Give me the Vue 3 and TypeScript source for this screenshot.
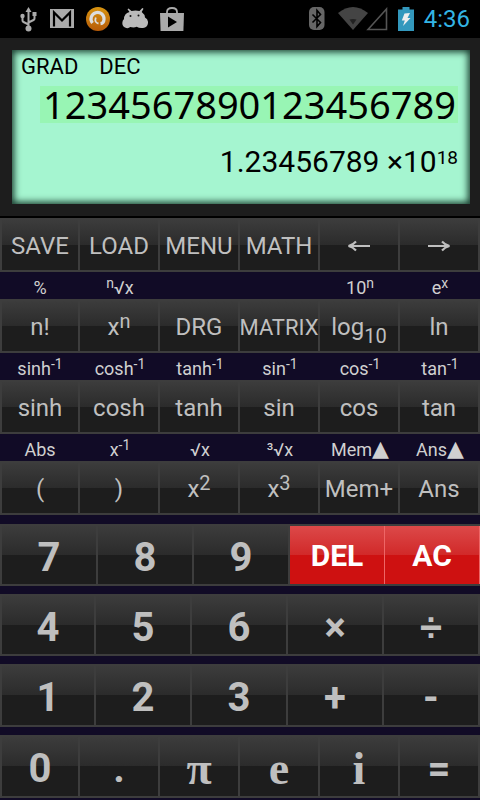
<script setup lang="ts">
import { ref } from 'vue'

interface Key {
  base: string
  sup?: string
  sub?: string
  kind?: 'small' | 'serif' | 'danger' | 'divide' | 'left' | 'right'
  name?: string
}

interface Hint {
  pre?: string
  text?: string
  sup?: string
  recall?: boolean
}

interface FunctionRow {
  keys: Key[]
  hints?: Hint[]
}

const expression = ref('1234567890123456789')

const functionRows: FunctionRow[] = [
  {
    keys: [
      { base: 'SAVE' },
      { base: 'LOAD' },
      { base: 'MENU' },
      { base: 'MATH' },
      { base: '', kind: 'left', name: 'Cursor left' },
      { base: '', kind: 'right', name: 'Cursor right' },
    ],
  },
  {
    hints: [{ text: '%' }, { pre: 'n', text: '√x' }, {}, {}, { text: '10', sup: 'n' }, { text: 'e', sup: 'x' }],
    keys: [
      { base: 'n!' },
      { base: 'x', sup: 'n' },
      { base: 'DRG' },
      { base: 'MATRIX', kind: 'small' },
      { base: 'log', sub: '10' },
      { base: 'ln' },
    ],
  },
  {
    hints: ['sinh', 'cosh', 'tanh', 'sin', 'cos', 'tan'].map((text) => ({ text, sup: '-1' })),
    keys: ['sinh', 'cosh', 'tanh', 'sin', 'cos', 'tan'].map((base) => ({ base })),
  },
  {
    hints: [
      { text: 'Abs' },
      { text: 'x', sup: '-1' },
      { text: '√x' },
      { text: '³√x' },
      { text: 'Mem', recall: true },
      { text: 'Ans', recall: true },
    ],
    keys: [
      { base: '(' },
      { base: ')' },
      { base: 'x', sup: '2' },
      { base: 'x', sup: '3' },
      { base: 'Mem+' },
      { base: 'Ans' },
    ],
  },
]

const numberRows: Key[][] = [
  [{ base: '7' }, { base: '8' }, { base: '9' }, { base: 'DEL', kind: 'danger' }, { base: 'AC', kind: 'danger' }],
  [{ base: '4' }, { base: '5' }, { base: '6' }, { base: '×' }, { base: '÷', kind: 'divide' }],
  [{ base: '1' }, { base: '2' }, { base: '3' }, { base: '+' }, { base: '-' }],
  [
    { base: '0' },
    { base: '.' },
    { base: 'π', kind: 'serif' },
    { base: 'e', kind: 'serif' },
    { base: 'i', kind: 'serif' },
    { base: '=' },
  ],
]

function press(key: Key): void {
  if (key.base === 'AC') expression.value = ''
  else if (key.base === 'DEL') expression.value = expression.value.slice(0, -1)
  else if (/^[0-9.+\-×÷πei]$/.test(key.base)) expression.value += key.base
}
</script>

<template>
  <div class="calculator">
    <header class="status">
      <div class="status-group notices">
        <svg width="18" height="26" viewBox="0 0 18 26" aria-hidden="true">
          <g fill="none" stroke="#aaa" stroke-width="2">
            <path d="M8.500 4v18M2.500 10v4.500q0 1 1 1.500l5 2.500M14.500 9v3.500q0 1-1 1.500l-5 2.500" />
          </g>
          <path d="M5.500 6L8.500 1l3 5z" fill="#aaa" />
          <circle cx="8.500" cy="22.500" r="3" fill="#aaa" />
          <circle cx="2.500" cy="10" r="2.200" fill="#aaa" />
          <rect x="12.500" y="6" width="4" height="4" fill="#aaa" />
        </svg>
        <svg width="24" height="20" viewBox="0 0 24 20" aria-hidden="true">
          <rect width="24" height="19" fill="#aaa" />
          <path d="M4 17.500V3.500l8 8 8-8v14" fill="none" stroke="#000" stroke-width="2.200" />
        </svg>
        <svg width="24" height="24" viewBox="0 0 24 24" aria-hidden="true">
          <defs>
            <linearGradient id="amber" x1="0" y1="0" x2="0" y2="1">
              <stop offset="0" stop-color="#d79410" />
              <stop offset="1" stop-color="#b65a08" />
            </linearGradient>
          </defs>
          <circle cx="12" cy="12" r="12" fill="url(#amber)" />
          <path d="M6.500 16A6.500 6.500 0 1 1 18 12.500q-.2 3.800-3.500 4.200" fill="none" stroke="#ddd" stroke-width="3.200" />
          <path d="M9.800 10.500q-1.800 5 2.700 6" fill="none" stroke="#ddd" stroke-width="1.800" />
        </svg>
        <svg width="26" height="22" viewBox="0 0 26 22" aria-hidden="true">
          <path
            d="M2 11Q2 5.500 7.500 4L5.500 1.300l1-.8L9.500 3q4-1.200 8 0L20.300 0l1.200.8L19.700 4Q23 6.500 23 9.500q3.300 1.500 3 5.500-.5 4.500-5 5-4 .3-6.300-1.200-2.800 1.200-6.500.2-1.500 1.600-4 1Q.3 18.800.3 15 .3 12.500 2 11z"
            fill="#bbb"
          />
          <circle cx="8.500" cy="8" r="1" fill="#111" />
          <circle cx="16.500" cy="7.500" r="1" fill="#111" />
        </svg>
        <svg width="24" height="25" viewBox="0 0 24 25" aria-hidden="true">
          <path d="M7 8V5q0-4 5-4t5 4v3" fill="none" stroke="#aaa" stroke-width="1.800" />
          <path d="M0 6h24l-.6 18H.6z" fill="#aaa" />
          <path d="M8 9.500v11l9-5.500z" fill="#000" />
        </svg>
      </div>
      <div class="status-group signals">
        <svg width="16" height="24" viewBox="0 0 16 24" aria-hidden="true">
          <rect width="15.500" height="23" rx="5" fill="#666" />
          <path d="M3.500 7.500l8 8L8 19.500v-16l3.500 4-8 8" fill="none" stroke="#000" stroke-width="1.600" />
        </svg>
        <svg width="30" height="24" viewBox="0 0 30 24" aria-hidden="true">
          <path d="M0 6Q15-6 30 6L15 23z" fill="#444" />
          <path d="M11.500 12.500q3.500-1 7 0L15 17.500z" fill="#222" />
        </svg>
        <svg width="22" height="24" viewBox="0 0 22 24" aria-hidden="true">
          <path d="M2 22.500L20.500 2v20.500z" fill="none" stroke="#555" stroke-width="1.600" />
        </svg>
        <svg class="battery" width="16" height="24" viewBox="0 0 16 24" aria-hidden="true">
          <path d="M0 2.500h4.500V0h7v2.500H16V24H0z" fill="#3398bd" />
          <path d="M6.500 6.500L12 6l-2.500 5h3L5 19l1.800-5.500h-3z" fill="#eee" />
        </svg>
        <time class="clock">4:36</time>
      </div>
    </header>

    <section class="bezel">
      <div class="screen">
        <div class="modes"><span>GRAD</span><span>DEC</span></div>
        <div class="expression">{{ expression }}</div>
        <output class="result">1.23456789 ×10<sup>18</sup></output>
      </div>
    </section>

    <main class="pad">
      <template v-for="(row, r) in functionRows" :key="r">
        <div v-if="row.hints" class="hints">
          <span v-for="(hint, h) in row.hints" :key="h"
            ><sup v-if="hint.pre">{{ hint.pre }}</sup
            >{{ hint.text }}<sup v-if="hint.sup">{{ hint.sup }}</sup
            ><span v-if="hint.recall" class="triangle">▲</span></span
          >
        </div>
        <div class="keys functions">
          <button
            v-for="(key, k) in row.keys"
            :key="k"
            type="button"
            class="key"
            :class="key.kind"
            :aria-label="key.name"
            @click="press(key)"
          >
            <svg v-if="key.kind === 'left'" width="24" height="12" viewBox="0 0 24 12" aria-hidden="true">
              <path d="M23 6H2M9 1.500Q6 5 1.500 6 6 7 9 10.500" />
            </svg>
            <svg v-else-if="key.kind === 'right'" width="24" height="12" viewBox="0 0 24 12" aria-hidden="true">
              <path d="M1 6h21M15 1.500Q18 5 22.500 6 18 7 15 10.500" />
            </svg>
            <span v-else
              >{{ key.base }}<sup v-if="key.sup">{{ key.sup }}</sup
              ><sub v-if="key.sub">{{ key.sub }}</sub></span
            >
          </button>
        </div>
      </template>

      <div class="numbers">
        <div
          v-for="(row, r) in numberRows"
          :key="r"
          class="keys number-row"
          :class="{ six: row.length === 6, clearing: r === 0, tall: r > 1 }"
        >
          <button
            v-for="key in row"
            :key="key.base"
            type="button"
            class="key"
            :class="key.kind"
            @click="press(key)"
          >
            {{ key.base }}
          </button>
        </div>
      </div>
    </main>
  </div>
</template>

<style>
body {
  margin: 0;
  background: #110b26;
}
</style>

<style scoped>
.calculator {
  min-height: 100vh;
  box-sizing: border-box;
  background: #110b26;
  font-family: Roboto, 'Liberation Sans', sans-serif;
  color: #bfbfbf;
}

.status {
  display: flex;
  justify-content: space-between;
  align-items: center;
  height: 38px;
  padding: 0 10px 0 20px;
  background: #000;
}

.status-group {
  display: flex;
  align-items: center;
}

.notices {
  gap: 12px;
}

.signals {
  gap: 10px;
}

.signals svg:nth-child(1) {
  margin-right: 3px;
}

.signals svg:nth-child(2) {
  margin-right: -12px;
}

.clock {
  color: #33b5e5;
  font-size: 24px;
  line-height: 40px;
}

.bezel {
  padding: 12px 10px 12px 12px;
  border-bottom: 2px solid #000;
  background: #1d1d1d;
}

.screen {
  display: flex;
  flex-direction: column;
  box-sizing: border-box;
  min-height: 154px;
  padding: 4px 12px 20px 9px;
  background: #a5f5d0;
  box-shadow: inset 0 0 7px 2px #16382b;
  color: #000;
}

.modes {
  display: flex;
  gap: 21px;
  font-size: 22px;
  line-height: 26px;
  padding-bottom: 6px;
}

.expression {
  align-self: flex-end;
  min-height: 37px;
  padding: 0 2px 0 3px;
  background: #98f5b4;
  font-family: 'Noto Sans', 'Open Sans', sans-serif;
  font-size: 38px;
  line-height: 37px;
}

.result {
  align-self: flex-end;
  padding-top: 20px;
  font-size: 30px;
  line-height: 38px;
}

sup,
sub {
  line-height: 0;
}

.result sup {
  font-size: 19px;
  vertical-align: 8px;
}

.hints {
  display: grid;
  grid-template-columns: repeat(6, 1fr);
  height: 27px;
  font-size: 18px;
  line-height: 32px;
  text-align: center;
  white-space: nowrap;
  color: #d0d0d0;
}

.hints sup {
  font-size: 14px;
  vertical-align: 6px;
}

.triangle {
  font-family: 'DejaVu Sans', sans-serif;
  font-size: 22px;
  line-height: 0;
}

.keys {
  display: grid;
  border: solid #3d3d3d;
  border-width: 2px 0;
}

.functions {
  grid-template-columns: repeat(6, 1fr);
}

.key {
  display: flex;
  align-items: center;
  justify-content: center;
  box-sizing: border-box;
  min-width: 0;
  height: 50px;
  margin: 0;
  padding: 2px 0 0;
  border: solid #3d3d3d;
  border-width: 0 2px 0 0;
  background: linear-gradient(#3c3c3c, #2b2b2b 50%, #1d1d1d 50%);
  color: inherit;
  font-family: inherit;
  font-size: 24px;
  white-space: nowrap;
}

.key:first-child {
  border-left-width: 2px;
}

.key sup,
.key sub {
  font-size: 20px;
}

.key sup {
  vertical-align: 7px;
}

.key sub {
  vertical-align: -8px;
}

.key.small {
  font-size: 22px;
}

.key svg {
  fill: none;
  stroke: #bfbfbf;
  stroke-width: 2;
}

.numbers {
  display: grid;
  gap: 8px;
  padding: 9px 0 2px;
}

.number-row {
  grid-template-columns: repeat(5, 1fr);
}

.number-row.six {
  grid-template-columns: repeat(6, 1fr);
}

.number-row.clearing {
  grid-template-columns: 98fr 96fr 96fr 95fr 95fr;
}

.number-row .key {
  height: 58px;
  padding-top: 4px;
  font-size: 40px;
  font-weight: 700;
}

.number-row.tall .key {
  height: 59px;
}

.number-row .danger {
  padding-top: 0;
  border-color: #ee6666;
  border-width: 0 1px 0 0;
  background: linear-gradient(#dc4949, #d12929 50%, #ce1111 50%);
  color: #fff;
  font-size: 30px;
}

.number-row .divide {
  font-family: 'Liberation Sans', sans-serif;
}

.number-row .serif {
  font-family: 'Liberation Serif', serif;
  font-size: 46px;
}
</style>
